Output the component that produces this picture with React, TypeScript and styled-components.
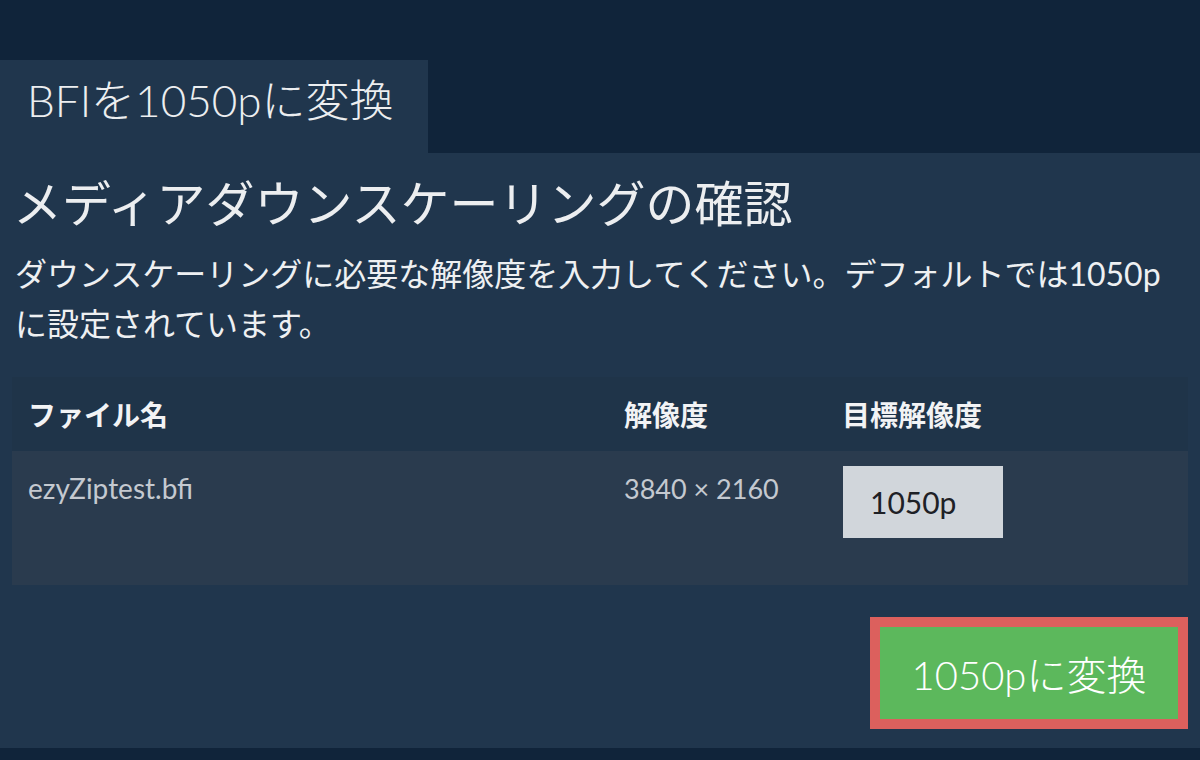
import React from "react";
import styled, { createGlobalStyle } from "styled-components";

const GlobalStyle = createGlobalStyle`
  html, body {
    margin: 0;
    padding: 0;
    background: #10243a;
  }
  * { box-sizing: border-box; }
`;

const FONT = `Lato, "Noto Sans CJK JP", sans-serif`;

const Page = styled.div`
  width: 1200px;
  height: 760px;
  background: #10243a;
  padding-top: 60px;
  display: flex;
  flex-direction: column;
  font-family: ${FONT};
  overflow: hidden;
`;

const TabRow = styled.div`
  display: flex;
`;

const Tab = styled.div`
  width: 428px;
  height: 93px;
  background: #20364d;
  display: flex;
  align-items: center;
  padding: 0 0 18px 27px;
  font-size: 44px;
  font-weight: 300;
  color: #eceef0;
  white-space: nowrap;
`;

const Panel = styled.div`
  flex: 1;
  margin-bottom: 12px;
  background: #20364d;
  padding: 21px 12px 0 12px;
  display: flex;
  flex-direction: column;
`;

const Title = styled.h1`
  margin: 0 0 0 1px;
  font-size: 49px;
  line-height: 59px;
  font-weight: 400;
  color: #eceef0;
  white-space: nowrap;
`;

const Description = styled.p`
  margin: 16px 0 0 3px;
  font-size: 32px;
  line-height: 50px;
  font-weight: 400;
  color: #eef0f2;
  white-space: nowrap;
`;

const Table = styled.div`
  margin-top: 28px;
  display: grid;
  grid-template-columns: 596px 218px 1fr;
`;

const HeadCell = styled.div`
  height: 74px;
  background: #1f3449;
  display: flex;
  align-items: center;
  padding-left: 16px;
  font-size: 28px;
  font-weight: 700;
  color: #f2f3f5;
`;

const BodyCell = styled.div`
  height: 134px;
  background: #2a3b4e;
  padding: 15px 0 0 16px;
  font-size: 28px;
  line-height: 44px;
  color: #c4c9d0;
`;

const ResolutionText = styled.span`
  font-size: 27px;
`;

const ResInput = styled.div`
  width: 160px;
  height: 72px;
  margin-left: 1px;
  background: #d1d6db;
  display: flex;
  align-items: center;
  padding-left: 27px;
  font-size: 30px;
  color: #1e2126;
`;

const Actions = styled.div`
  display: flex;
  justify-content: flex-end;
  margin-top: 32px;
`;

const ConvertButton = styled.button`
  width: 318px;
  height: 112px;
  border: 10px solid #dc605d;
  background: #5cb85c;
  color: #ffffff;
  font-family: ${FONT};
  font-size: 40px;
  font-weight: 300;
  padding: 0;
  display: flex;
  align-items: center;
  justify-content: center;
  cursor: pointer;
`;

export default function App() {
  return (
    <>
      <GlobalStyle />
      <Page>
        <TabRow>
          <Tab>BFIを1050pに変換</Tab>
        </TabRow>
        <Panel>
          <Title>メディアダウンスケーリングの確認</Title>
          <Description>
            ダウンスケーリングに必要な解像度を入力してください。デフォルトでは1050p
            <br />
            に設定されています。
          </Description>
          <Table>
            <HeadCell>ファイル名</HeadCell>
            <HeadCell>解像度</HeadCell>
            <HeadCell>目標解像度</HeadCell>
            <BodyCell>ezyZiptest.bfi</BodyCell>
            <BodyCell>
              <ResolutionText>3840 × 2160</ResolutionText>
            </BodyCell>
            <BodyCell>
              <ResInput>1050p</ResInput>
            </BodyCell>
          </Table>
          <Actions>
            <ConvertButton>1050pに変換</ConvertButton>
          </Actions>
        </Panel>
      </Page>
    </>
  );
}
